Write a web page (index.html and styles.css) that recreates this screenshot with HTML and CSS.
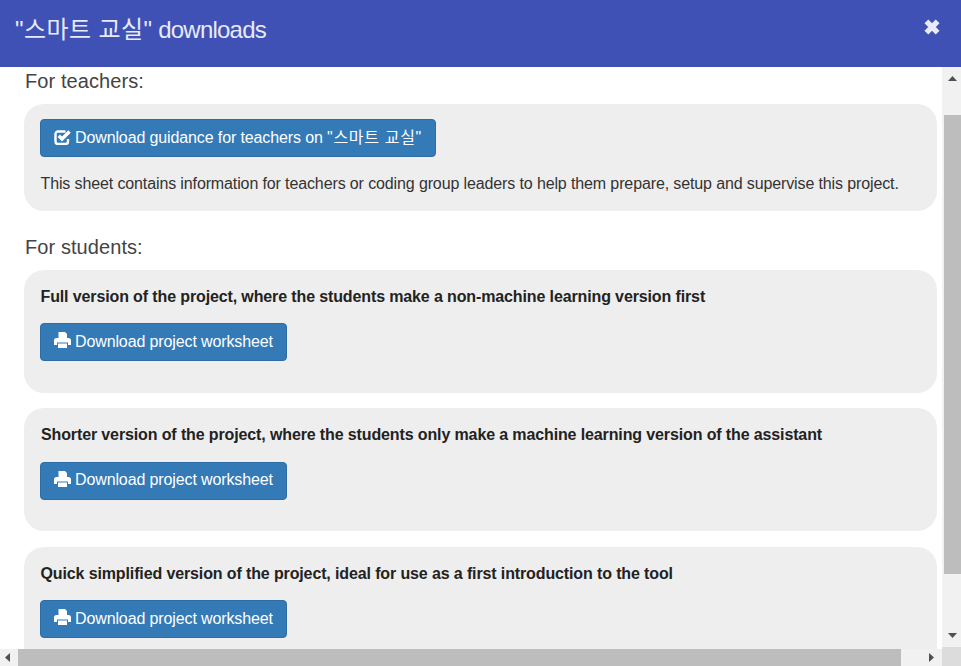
FILE: index.html
```html
<!DOCTYPE html>
<html lang="en">
<head>
<meta charset="utf-8">
<title>downloads</title>
<link rel="stylesheet" href="styles.css">
</head>
<body>
<div class="dialog">
  <header class="dialog-header">
    <h2 class="dialog-title"><span class="title-ko">"스마트 교실"</span> downloads</h2>
    <svg class="close-icon" viewBox="0 0 16 16" aria-label="Close"><path d="M3 3L13 13M13 3L3 13"/></svg>
  </header>
  <main class="dialog-body">
    <h3 class="section-title">For teachers:</h3>
    <section class="card card-teacher">
      <a class="btn">
        <svg class="btn-icon check-icon" viewBox="0 0 17 16"><path class="check-box" d="M11.500 2.500H4A2.500 2.500 0 0 0 1.500 5v7.500A2.500 2.500 0 0 0 4 15h7.500A2.500 2.500 0 0 0 14 12.500V10"/><path class="check-mark" d="M4.800 6.800l3.200 3.200 7.500-7.500"/></svg>
        <span>Download guidance for teachers on <span class="btn-ko">"스마트 교실"</span></span>
      </a>
      <p class="card-text">This sheet contains information for teachers or coding group leaders to help them prepare, setup and supervise this project.</p>
    </section>
    <h3 class="section-title section-students">For students:</h3>
    <section class="card card-student">
      <h4 class="card-heading">Full version of the project, where the students make a non-machine learning version first</h4>
      <a class="btn">
        <svg class="btn-icon print-icon" viewBox="0 0 17 16"><path d="M4.500 0H11l2 2v4h1.500A2.500 2.500 0 0 1 17 8.500V13h-3v-2.500H3V13H0V8.500A2.500 2.500 0 0 1 2.500 6h2zM4 11.500h9V16H4z"/></svg>
        <span>Download project worksheet</span>
      </a>
    </section>
    <section class="card card-student">
      <h4 class="card-heading card-heading-nudged">Shorter version of the project, where the students only make a machine learning version of the assistant</h4>
      <a class="btn">
        <svg class="btn-icon print-icon" viewBox="0 0 17 16"><path d="M4.500 0H11l2 2v4h1.500A2.500 2.500 0 0 1 17 8.500V13h-3v-2.500H3V13H0V8.500A2.500 2.500 0 0 1 2.500 6h2zM4 11.500h9V16H4z"/></svg>
        <span>Download project worksheet</span>
      </a>
    </section>
    <section class="card card-student">
      <h4 class="card-heading">Quick simplified version of the project, ideal for use as a first introduction to the tool</h4>
      <a class="btn">
        <svg class="btn-icon print-icon" viewBox="0 0 17 16"><path d="M4.500 0H11l2 2v4h1.500A2.500 2.500 0 0 1 17 8.500V13h-3v-2.500H3V13H0V8.500A2.500 2.500 0 0 1 2.500 6h2zM4 11.500h9V16H4z"/></svg>
        <span>Download project worksheet</span>
      </a>
    </section>
  </main>
  <aside class="vbar">
    <div class="vtrack">
      <svg class="arrow arrow-up" viewBox="0 0 9 5"><path d="M4.500 0L9 5H0z"/></svg>
      <div class="vthumb"></div>
      <svg class="arrow arrow-down" viewBox="0 0 9 5"><path d="M0 0H9L4.500 5z"/></svg>
    </div>
    <div class="corner"></div>
  </aside>
  <div class="htrack">
    <svg class="harrow arrow-left" viewBox="0 0 5 9"><path d="M5 0V9L0 4.500z"/></svg>
    <div class="hthumb"></div>
    <svg class="harrow arrow-right" viewBox="0 0 5 9"><path d="M0 0L5 4.500L0 9z"/></svg>
  </div>
</div>
</body>
</html>
```
FILE: styles.css
```css
* { box-sizing: border-box; }
html, body { margin: 0; padding: 0; height: 100%; overflow: hidden; }
body {
  background: #fff;
  color: #333;
  font-family: "Liberation Sans", "Noto Sans CJK KR", Arial, sans-serif;
  font-size: 16px;
  line-height: 1.42857;
}
.dialog {
  display: grid;
  grid-template-columns: 1fr 19px;
  grid-template-rows: 67px 1fr 17px;
  width: 100%;
  height: 100vh;
}
.dialog-header {
  grid-column: 1 / 3;
  display: flex;
  justify-content: space-between;
  align-items: flex-start;
  padding: 0 20px 0 15px;
  background: #3f51b5;
  color: #e8eaf6;
}
.dialog-title {
  margin: 14px 0 0;
  font-size: 24px;
  font-weight: 400;
  line-height: 32px;
  letter-spacing: -0.78px;
}
.title-ko { letter-spacing: 0.4px; }
.close-icon {
  width: 18px;
  height: 18px;
  margin-top: 18px;
  fill: none;
  stroke: #e8eaf6;
  stroke-width: 4.800;
  flex: none;
}
.dialog-body {
  grid-column: 1;
  grid-row: 2 / 4;
  overflow: hidden;
  padding: 0 5px 0 24px;
  min-width: 0;
  min-height: 0;
}
.section-title {
  margin: 0;
  padding-left: 1px;
  font-size: 20px;
  font-weight: 400;
  line-height: 28px;
  letter-spacing: 0.08px;
  color: #444;
}
.section-students { margin-top: 22px; }
.card {
  background: #eee;
  border-radius: 20px;
  padding: 15px 16px;
}
.card-teacher { margin-top: 9px; height: 107px; }
.card-student { height: 123px; margin-top: 15.500px; }
.section-students + .card { margin-top: 8.800px; }
.card-heading {
  margin: 0 0 14.760px;
  padding: 1px 0 0 0.500px;
  font-size: 16px;
  font-weight: 700;
  line-height: 22.860px;
  letter-spacing: -0.125px;
  color: #222;
}
.card-heading-nudged { padding-left: 1px; }
.card-text {
  margin: 16px 0 0;
  padding-left: 0.500px;
  font-size: 16px;
  line-height: 22px;
  letter-spacing: -0.122px;
  color: #333;
}
.btn {
  display: inline-flex;
  align-items: center;
  gap: 4px;
  height: 38px;
  padding: 0 13px;
  border: 1px solid #2e6da4;
  border-radius: 4px;
  background: #337ab7;
  color: #fff;
  font-size: 16px;
  letter-spacing: -0.12px;
  white-space: nowrap;
}
.btn-ko { letter-spacing: 0.68px; }
.btn-icon { width: 17px; height: 16px; flex: none; }
.print-icon { fill: #fff; margin-top: -4px; }
.check-icon { fill: none; stroke: #fff; margin-top: -3px; }
.check-box { stroke-width: 2.400; }
.check-mark { stroke-width: 3.400; }
.vbar {
  grid-column: 2;
  grid-row: 2 / 4;
  display: flex;
  flex-direction: column;
}
.vtrack {
  flex: 1;
  display: flex;
  flex-direction: column;
  align-items: center;
  background: #f1f1f1;
}
.arrow { width: 9px; height: 5px; margin-left: 2px; fill: #505050; flex: none; }
.arrow-up { margin-top: 9px; }
.arrow-down { margin-top: auto; margin-bottom: 9px; }
.vthumb {
  align-self: stretch;
  height: 459px;
  margin: 34px 0 0 2px;
  background: #bdbdbd;
}
.corner { height: 19px; background: #dcdcdc; }
.htrack {
  grid-column: 1;
  grid-row: 3;
  z-index: 1;
  display: flex;
  align-items: center;
  background: #f1f1f1;
}
.harrow { width: 5px; height: 9px; fill: #505050; flex: none; }
.arrow-left { margin-left: 5px; }
.hthumb {
  align-self: stretch;
  width: 883px;
  margin-left: 8px;
  background: #bdbdbd;
}
.arrow-right { margin-left: 28px; }
```
